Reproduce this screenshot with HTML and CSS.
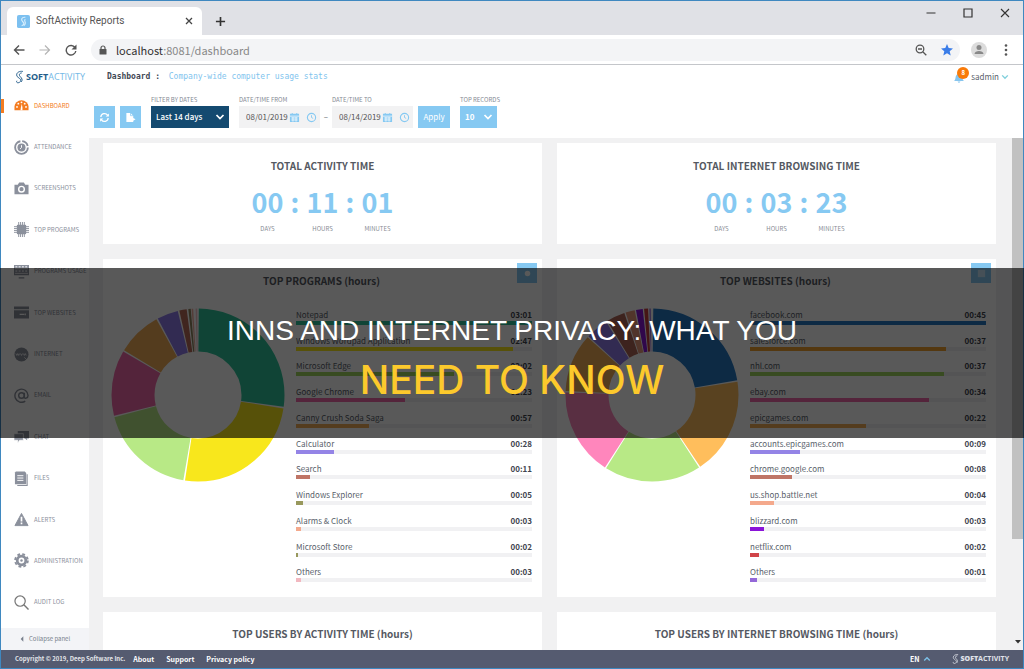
FILE: index.html
```html
<!DOCTYPE html>
<html lang="en">
<head>
<meta charset="utf-8">
<title>SoftActivity Reports</title>
<link rel="stylesheet" href="styles.css">
</head>
<body>
<svg class="defs" width="0" height="0" aria-hidden="true">
  <symbol id="chev" viewBox="0 0 10 10"><path d="M1.500 3l3.500 3.600L8.500 3" fill="none" stroke="currentColor" stroke-width="1.700"/></symbol>
  <symbol id="cal" viewBox="0 0 12 12"><path fill="currentColor" d="M1 2h2V1h1v1h4V1h1v1h2v9H1z"/><path stroke="#fff" stroke-width=".8" d="M1 4.500h10M2.500 6.500h7M2.500 8.700h7M4.300 5.500v5M7.700 5.500v5"/></symbol>
  <symbol id="clock" viewBox="0 0 12 12"><circle cx="6" cy="6" r="4.500" fill="none" stroke="currentColor" stroke-width="1.200"/><path d="M6 3.500V6l1.800 1" fill="none" stroke="currentColor"/></symbol>
  <symbol id="mark" viewBox="0 0 12 18"><path fill="none" stroke="currentColor" stroke-width="1.300" d="M10.500 1.500C6 .8 2 3 2.200 6.500c.2 3 3.500 3.300 5 5.500 1 1.700 0 4.500-3 4.800-2 0-2.600-1.500-1.700-2.800M9 3.500C5.500 4 5 6.500 7 8.500s3.500 4 1.500 7"/></symbol>
</svg>
<div class="window">
  <div class="tabs">
    <div class="tab">
      <svg class="fav" viewBox="0 0 14 14"><rect width="14" height="14" rx="2" fill="#7cc0f0"/><path d="M9 2.500C5 2 4 5 6 7s2 3.500-1 4.500M9 4.500c-2 1 0 2.500 0 4S8 11 7.500 11.500" fill="none" stroke="#d8eefc" stroke-width="1.200"/></svg>
      <span class="tab-title">SoftActivity Reports</span>
      <svg class="x" viewBox="0 0 8 8"><path d="M1 1l6 6M7 1L1 7" stroke="#444" stroke-width="1.300"/></svg>
    </div>
    <svg class="plus" viewBox="0 0 12 12"><path d="M6 1v10M1 6h10" stroke="#333" stroke-width="1.800"/></svg>
    <div class="wincontrols">
      <svg viewBox="0 0 10 10"><path d="M.5 5h9" stroke="#333"/></svg>
      <svg viewBox="0 0 10 10"><path d="M1 1h8v8H1z" fill="none" stroke="#333" stroke-width="1.200"/></svg>
      <svg viewBox="0 0 10 10"><path d="M1 1l8 8M9 1L1 9" stroke="#333" stroke-width="1.100"/></svg>
    </div>
  </div>
  <div class="toolbar">
    <svg class="nav" viewBox="0 0 12 12"><path d="M11.500 6H1.500M6 1.500L1.500 6 6 10.500" fill="none" stroke="#555" stroke-width="1.400"/></svg>
    <svg class="nav" viewBox="0 0 12 12"><path d="M.5 6h10M6 1.500L10.500 6 6 10.500" fill="none" stroke="#b4b4b4" stroke-width="1.200"/></svg>
    <svg class="nav" viewBox="0 0 12 12"><path d="M10 3.500A4.800 4.800 0 1 0 10.800 7" fill="none" stroke="#555" stroke-width="1.400"/><path d="M11.500.5v5h-5z" fill="#555"/></svg>
    <div class="url">
      <svg class="lock" viewBox="0 0 8 10"><path d="M2 5V3a2 2 0 0 1 4 0v2" fill="none" stroke="#555" stroke-width="1.200"/><rect x=".5" y="4" width="7" height="5.500" rx=".6" fill="#555"/></svg>
      <span class="addr">localhost<span>:8081/dashboard</span></span>
      <svg class="mag" viewBox="0 0 12 12"><circle cx="5" cy="5" r="3.800" fill="none" stroke="#555" stroke-width="1.300"/><path d="M3 5h4M8 8l3.300 3.300" stroke="#555" stroke-width="1.300"/></svg>
      <svg class="mag" viewBox="0 0 12 12"><path fill="#3b7de8" d="M6 0l1.700 4 4.300.4-3.300 2.800 1 4.300L6 9.200l-3.700 2.300 1-4.300L0 4.400 4.300 4z"/></svg>
    </div>
    <svg class="avatar" viewBox="0 0 16 16"><circle cx="8" cy="8" r="8" fill="#dcdcdc"/><circle cx="8" cy="5.500" r="2.500" fill="#888"/><path d="M3.500 12c0-4 9-4 9 0z" fill="#888"/></svg>
    <svg class="dots" viewBox="0 0 4 12"><g fill="#555"><circle cx="2" cy="1.500" r="1.300"/><circle cx="2" cy="6" r="1.300"/><circle cx="2" cy="10.500" r="1.300"/></g></svg>
  </div>

  <header class="appbar">
    <div class="logo"><svg viewBox="0 0 12 18"><use href="#mark"/></svg><b>SOFT</b><span>ACTIVITY</span></div>
    <h1>Dashboard : <span>Company-wide computer usage stats</span></h1>
    <div class="user">
      <div class="bell"><svg viewBox="0 0 12 12"><path fill="#86c5ee" d="M1 10c2-1.500 1-4 2.500-6S8 2 9 3.500 8.500 8 11 10zM4.500 10.500h3l-1.500 1.500z"/></svg><span class="badge">8</span></div>
      <span>sadmin</span><svg class="uchev" viewBox="0 0 10 10"><use href="#chev"/></svg>
    </div>
  </header>

  <div class="body">
    <nav class="side">
      <ul>
        <li class="on"><svg viewBox="0 0 16 16"><path fill="currentColor" d="M.5 13V9a7.500 6.500 0 0 1 15 0v4z"/><g fill="#fff"><circle cx="3.200" cy="9.500" r="1"/><circle cx="4.600" cy="6" r="1"/><circle cx="8" cy="4.600" r="1"/><circle cx="11.400" cy="6" r="1"/><circle cx="12.800" cy="9.500" r="1"/><path d="M7.300 10l1-4 .7 4v3H7z"/></g></svg><a href="#">DASHBOARD</a></li>
        <li><svg viewBox="0 0 16 16"><circle cx="8" cy="8" r="6.800" fill="none" stroke="currentColor" stroke-width="2" stroke-dasharray="30 2 8 2"/><circle cx="8" cy="8" r="4.300" fill="currentColor"/><path d="M8 5.500V8l-1.500 1.500" stroke="#fff" fill="none"/></svg><a href="#">ATTENDANCE</a></li>
        <li><svg viewBox="0 0 16 16"><path fill="currentColor" d="M.5 4h3.500l1.500-2.500h5L12 4h3.500v10H.5z"/><circle cx="8" cy="8.700" r="3" fill="none" stroke="#fff" stroke-width="1.500"/></svg><a href="#">SCREENSHOTS</a></li>
        <li><svg viewBox="0 0 16 16"><rect x="3" y="3" width="10" height="10" rx="1" fill="currentColor"/><path stroke="currentColor" d="M5 0v16M7 0v16M9 0v16M11 0v16M0 5h16M0 7h16M0 9h16M0 11h16"/></svg><a href="#">TOP PROGRAMS</a></li>
        <li><svg viewBox="0 0 16 16"><path fill="currentColor" d="M0 1h16v11H0zM5 14h6v1.500H5z"/><path stroke="#fff" stroke-dasharray="2 1.500" d="M1.500 3h13M1.500 7.500h13"/><path stroke="#fff" stroke-width=".7" d="M1 5h14M1 10h14"/></svg><a href="#">PROGRAMS USAGE</a></li>
        <li><svg viewBox="0 0 16 16"><path fill="currentColor" d="M0 1.500h16v3H0zM0 5.500h16v9H0z"/><path stroke="#fff" stroke-width="1.200" d="M6 10h5M12 9v2"/></svg><a href="#">TOP WEBSITES</a></li>
        <li><svg viewBox="0 0 16 16"><circle cx="8" cy="8" r="7.500" fill="currentColor"/><path stroke="#fff" stroke-width=".8" fill="none" d="M2 7l1 2 1-2 1 2 1-2M7 7l1 2 1-2M10 7l1 2 1-2 1 2M11 11l3 3"/></svg><a href="#">INTERNET</a></li>
        <li><svg viewBox="0 0 16 16"><g fill="none" stroke="currentColor" stroke-width="1.500"><circle cx="8" cy="8" r="3"/><path d="M11 5v4.500c0 2.500 4 1.500 4-1.500a7 7 0 1 0-3 6"/></g></svg><a href="#">EMAIL</a></li>
        <li><svg viewBox="0 0 16 16"><path fill="currentColor" d="M4 2h12v8h-2v2l-2.500-2H4z"/><path fill="currentColor" stroke="#fff" stroke-width=".7" d="M0 5h10v7H6l-2 3v-3H0z"/></svg><a href="#">CHAT</a></li>
        <li><svg viewBox="0 0 16 16"><path fill="currentColor" d="M1 1.500L2 .5h9.500L13 2v12H1z"/><path fill="none" stroke="currentColor" stroke-width="1.200" d="M14 3.500v12H3.500"/><path stroke="#fff" d="M3.500 5h6.500M3.500 7.500h6.500M3.500 10h6.500"/></svg><a href="#">FILES</a></li>
        <li><svg viewBox="0 0 16 16"><path fill="currentColor" stroke="currentColor" stroke-linejoin="round" d="M8 1.500L15 14.500H1z"/><path stroke="#fff" stroke-width="1.800" d="M8 5v5M8 11.300v1.800"/></svg><a href="#">ALERTS</a></li>
        <li><svg viewBox="0 0 16 16"><circle cx="8" cy="8" r="4.600" fill="none" stroke="currentColor" stroke-width="3"/><circle cx="8" cy="8" r="6.800" fill="none" stroke="currentColor" stroke-width="2" stroke-dasharray="3 2.340"/><circle cx="8" cy="8" r="1.300" fill="currentColor"/></svg><a href="#">ADMINISTRATION</a></li>
        <li><svg viewBox="0 0 16 16"><circle cx="6.500" cy="6.500" r="5.500" fill="none" stroke="#777" stroke-width="1.300"/><path d="M10.500 10.500l5 5" stroke="#777" stroke-width="1.500"/></svg><a href="#">AUDIT LOG</a></li>
      </ul>
      <button class="collapse" type="button"><svg viewBox="0 0 6 8"><path d="M5 0v8L1 4z" fill="#777f8c"/></svg>Collapse panel</button>
    </nav>

    <div class="content">
      <form class="filters">
        <button class="sq" type="button" aria-label="Refresh"><svg viewBox="0 0 12 12"><path d="M2 5.500a4 4 0 0 1 7.300-2M10 6.500a4 4 0 0 1-7.300 2" fill="none" stroke="#fff" stroke-width="1.400"/><path fill="#fff" d="M10.800 1.500v3.500H7.300zM1.200 10.500V7h3.500z"/></svg></button>
        <button class="sq" type="button" aria-label="Export"><svg viewBox="0 0 12 12"><path fill="#fff" d="M1.500 1H6l3 3v2.500L11.500 8 9 9.500v1.500H1.500z"/><path d="M6 1v3h3" stroke="#86c9f2" fill="none" stroke-width=".8"/></svg></button>
        <div class="field days"><label for="range">FILTER BY DATES</label><div class="pick dark"><select id="range"><option>Last 14 days</option></select><svg viewBox="0 0 10 10"><use href="#chev"/></svg></div></div>
        <div class="field from"><label for="from">DATE/TIME FROM</label><div class="date"><input id="from" type="text" value="08/01/2019"><svg viewBox="0 0 12 12"><use href="#cal"/></svg><svg viewBox="0 0 12 12"><use href="#clock"/></svg></div></div>
        <span class="dash">–</span>
        <div class="field"><label for="to">DATE/TIME TO</label><div class="date"><input id="to" type="text" value="08/14/2019"><svg viewBox="0 0 12 12"><use href="#cal"/></svg><svg viewBox="0 0 12 12"><use href="#clock"/></svg></div></div>
        <button class="apply" type="button">Apply</button>
        <div class="field records"><label for="top">TOP RECORDS</label><div class="pick"><select id="top"><option>10</option></select><svg viewBox="0 0 10 10"><use href="#chev"/></svg></div></div>
      </form>
      <div class="scroller">
        <main class="cards">
          <section class="card total">
            <h2>TOTAL ACTIVITY TIME</h2>
            <div class="timer"><div><b>00</b><small>DAYS</small></div><i>:</i><div><b>11</b><small>HOURS</small></div><i>:</i><div><b>01</b><small>MINUTES</small></div></div>
          </section>
          <section class="card total">
            <h2>TOTAL INTERNET BROWSING TIME</h2>
            <div class="timer"><div><b>00</b><small>DAYS</small></div><i>:</i><div><b>03</b><small>HOURS</small></div><i>:</i><div><b>23</b><small>MINUTES</small></div></div>
          </section>
          <section class="card chart">
            <h2>TOP PROGRAMS (hours)</h2>
            <button class="sq corner" type="button" aria-label="Settings"><svg viewBox="0 0 12 12"><circle cx="6" cy="6" r="3" fill="#fff"/></svg></button>
            <div class="split">
              <svg class="donut" viewBox="0 0 174 174"><g transform="rotate(-90 87 87)" fill="none" stroke-width="43">
                <circle pathLength="662" cx="87" cy="87" r="65" stroke="#2fc49a" stroke-dasharray="179 662" stroke-dashoffset="-1"/>
                <circle pathLength="662" cx="87" cy="87" r="65" stroke="#f8e71c" stroke-dasharray="165 662" stroke-dashoffset="-182"/>
                <circle pathLength="662" cx="87" cy="87" r="65" stroke="#b8e986" stroke-dasharray="120 662" stroke-dashoffset="-349"/>
                <circle pathLength="662" cx="87" cy="87" r="65" stroke="#f068a8" stroke-dasharray="81 662" stroke-dashoffset="-471"/>
                <circle pathLength="662" cx="87" cy="87" r="65" stroke="#f0ac58" stroke-dasharray="55 662" stroke-dashoffset="-554"/>
                <circle pathLength="662" cx="87" cy="87" r="65" stroke="#8f7bea" stroke-dasharray="26 662" stroke-dashoffset="-611"/>
                <circle pathLength="662" cx="87" cy="87" r="65" stroke="#b86a5a" stroke-dasharray="9 662" stroke-dashoffset="-639"/>
                <circle pathLength="662" cx="87" cy="87" r="65" stroke="#8f8560" stroke-dasharray="3 662" stroke-dashoffset="-650"/>
                <circle pathLength="662" cx="87" cy="87" r="65" stroke="#f0b0a0" stroke-dasharray="2 662" stroke-dashoffset="-654"/>
                <circle pathLength="662" cx="87" cy="87" r="65" stroke="#f2c4cc" stroke-dasharray="2 662" stroke-dashoffset="-659"/>
              </g></svg>
              <ul class="rows">
                <li><span>Notepad</span><b>03:01</b><div class="bar"><div class="c1" style="width:100%"></div></div></li>
                <li><span>Windows Wordpad Application</span><b>02:47</b><div class="bar"><div class="c2" style="width:92%"></div></div></li>
                <li><span>Microsoft Edge</span><b>02:02</b><div class="bar"><div class="c3" style="width:67%"></div></div></li>
                <li><span>Google Chrome</span><b>01:23</b><div class="bar"><div class="c4" style="width:46%"></div></div></li>
                <li><span>Canny Crush Soda Saga</span><b>00:57</b><div class="bar"><div class="c5" style="width:31%"></div></div></li>
                <li><span>Calculator</span><b>00:28</b><div class="bar"><div class="c6" style="width:16%"></div></div></li>
                <li><span>Search</span><b>00:11</b><div class="bar"><div class="c7" style="width:6%"></div></div></li>
                <li><span>Windows Explorer</span><b>00:05</b><div class="bar"><div class="c8" style="width:3%"></div></div></li>
                <li><span>Alarms &amp; Clock</span><b>00:03</b><div class="bar"><div class="c9" style="width:2%"></div></div></li>
                <li><span>Microsoft Store</span><b>00:02</b><div class="bar"><div class="c8" style="width:1%"></div></div></li>
                <li><span>Others</span><b>00:03</b><div class="bar"><div class="c10" style="width:2%"></div></div></li>
              </ul>
            </div>
          </section>
          <section class="card chart">
            <h2>TOP WEBSITES (hours)</h2>
            <button class="sq corner" type="button" aria-label="Settings"><svg viewBox="0 0 12 12"><rect x="2" y="2" width="8" height="8" fill="#c8e6f8"/></svg></button>
            <div class="split">
              <svg class="donut" viewBox="0 0 174 174"><g transform="rotate(-90 87 87)" fill="none" stroke-width="43">
                <circle pathLength="404" cx="87" cy="87" r="65" stroke="#2679c4" stroke-dasharray="89 404" stroke-dashoffset="-1"/>
                <circle pathLength="404" cx="87" cy="87" r="65" stroke="#ffbe5c" stroke-dasharray="73 404" stroke-dashoffset="-91"/>
                <circle pathLength="404" cx="87" cy="87" r="65" stroke="#b8e986" stroke-dasharray="73 404" stroke-dashoffset="-165"/>
                <circle pathLength="404" cx="87" cy="87" r="65" stroke="#ff86bc" stroke-dasharray="66 404" stroke-dashoffset="-239"/>
                <circle pathLength="404" cx="87" cy="87" r="65" stroke="#f0ac58" stroke-dasharray="44 404" stroke-dashoffset="-306"/>
                <circle pathLength="404" cx="87" cy="87" r="65" stroke="#8f7bea" stroke-dasharray="17 404" stroke-dashoffset="-351"/>
                <circle pathLength="404" cx="87" cy="87" r="65" stroke="#b06656" stroke-dasharray="14 404" stroke-dashoffset="-369"/>
                <circle pathLength="404" cx="87" cy="87" r="65" stroke="#e8977c" stroke-dasharray="7 404" stroke-dashoffset="-384"/>
                <circle pathLength="404" cx="87" cy="87" r="65" stroke="#8a14d8" stroke-dasharray="5 404" stroke-dashoffset="-392"/>
                <circle pathLength="404" cx="87" cy="87" r="65" stroke="#c84040" stroke-dasharray="3 404" stroke-dashoffset="-398"/>
                <circle pathLength="404" cx="87" cy="87" r="65" stroke="#9468d8" stroke-dasharray="1 404" stroke-dashoffset="-402"/>
              </g></svg>
              <ul class="rows">
                <li><span>facebook.com</span><b>00:45</b><div class="bar"><div class="w1" style="width:100%"></div></div></li>
                <li><span>salesforce.com</span><b>00:37</b><div class="bar"><div class="w2" style="width:83%"></div></div></li>
                <li><span>nhl.com</span><b>00:37</b><div class="bar"><div class="c3" style="width:82%"></div></div></li>
                <li><span>ebay.com</span><b>00:34</b><div class="bar"><div class="c4" style="width:76%"></div></div></li>
                <li><span>epicgames.com</span><b>00:22</b><div class="bar"><div class="c5" style="width:49%"></div></div></li>
                <li><span>accounts.epicgames.com</span><b>00:09</b><div class="bar"><div class="c6" style="width:21%"></div></div></li>
                <li><span>chrome.google.com</span><b>00:08</b><div class="bar"><div class="c7" style="width:18%"></div></div></li>
                <li><span>us.shop.battle.net</span><b>00:04</b><div class="bar"><div class="c9" style="width:10%"></div></div></li>
                <li><span>blizzard.com</span><b>00:03</b><div class="bar"><div class="w3" style="width:6%"></div></div></li>
                <li><span>netflix.com</span><b>00:02</b><div class="bar"><div class="w4" style="width:4%"></div></div></li>
                <li><span>Others</span><b>00:01</b><div class="bar"><div class="w5" style="width:3%"></div></div></li>
              </ul>
            </div>
          </section>
          <section class="card users"><h2>TOP USERS BY ACTIVITY TIME (hours)</h2></section>
          <section class="card users"><h2>TOP USERS BY INTERNET BROWSING TIME (hours)</h2></section>
        </main>
        <div class="scrollbar"><div class="thumb"></div><svg viewBox="0 0 8 6"><path d="M1 1h6L4 4.500z" fill="#333"/></svg></div>
      </div>
    </div>
  </div>

  <footer class="foot">
    <span class="copy">Copyright © 2019, Deep Software Inc.</span>
    <a href="#">About</a><a href="#">Support</a><a href="#">Privacy policy</a>
    <span class="lang">EN <svg viewBox="0 0 10 10"><path d="M1.500 7L5 3.500 8.500 7" fill="none" stroke="#7cc0e8" stroke-width="1.700"/></svg></span>
    <div class="logo light"><svg viewBox="0 0 12 18"><use href="#mark"/></svg><b>SOFT</b><span>ACTIVITY</span></div>
  </footer>
</div>
<div class="banner">
  <p class="line1">INNS AND INTERNET PRIVACY: WHAT YOU</p>
  <p class="line2">NEED TO KNOW</p>
</div>
</body>
</html>
```

FILE: styles.css
```css
* { box-sizing: border-box; }
body { margin: 0; color: #5a5f6b; font-family: "Noto Sans CJK SC", "Open Sans", sans-serif; font-size: 8px; line-height: 12px; }
ul, h1, h2, p { margin: 0; padding: 0; list-style: none; }
svg { display: block; flex: none; }
a { color: inherit; text-decoration: none; }
button, input, select { font: inherit; color: inherit; border: 0; padding: 0; margin: 0; background: none; }
.defs { position: absolute; }
.window { display: flex; flex-direction: column; height: 100vh; border: 1px solid #3f88c0; background: #fff; overflow: hidden; }

.tabs { display: flex; align-items: center; height: 34px; padding: 6px 13px 0 6px; background: #e0e1e6; }
.tab { display: flex; align-items: center; width: 195px; height: 28px; padding: 0 9px 0 10px; border-radius: 6px 6px 0 0; background: #fff; color: #555; font-family: Roboto, sans-serif; font-size: 10px; }
.fav { width: 13px; height: 13px; margin-right: 6px; }
.tab-title { flex: 1; white-space: nowrap; }
.x { width: 8px; height: 8px; }
.plus { width: 11px; height: 11px; margin-left: 13px; }
.wincontrols { display: flex; gap: 27px; margin-left: auto; padding-bottom: 16px; }
.wincontrols svg { width: 10px; height: 10px; }

.toolbar { display: flex; align-items: center; height: 30px; padding: 0 15px 0 12px; border-bottom: 1px solid #c4c6ca; }
.nav { width: 12px; height: 12px; margin-right: 14px; }
.url { display: flex; align-items: center; flex: 1; height: 22px; padding: 0 7px; border-radius: 11px; background: #f3f4f6; }
.lock { width: 8px; height: 10px; margin: 0 9px 0 1px; }
.addr { flex: 1; color: #333; font-size: 11px; line-height: 16px; }
.addr span { color: #888; }
.mag { width: 12px; height: 12px; margin-left: 14px; }
.avatar { width: 16px; height: 16px; margin: 0 17px 0 11px; }
.dots { width: 4px; height: 12px; }

.appbar { display: flex; align-items: center; height: 24px; padding: 0 14px; }
.logo { display: flex; align-items: center; width: 92px; color: #245d8a; font-family: "Open Sans", sans-serif; font-size: 9px; }
.logo svg { width: 9px; height: 14px; margin-right: 2px; }
.logo span { color: #72b8e6; }
h1 { color: #3f4854; font: bold 8px/12px "DejaVu Sans Mono", monospace; white-space: pre; }
h1 span { margin-left: 4px; color: #7fc4ee; font-weight: normal; }
.user { display: flex; align-items: center; margin-left: auto; font-size: 8px; }
.bell { position: relative; width: 12px; height: 12px; margin-right: 6px; }
.badge { position: absolute; left: 4px; top: -9px; width: 12px; height: 12px; border-radius: 6px; background: #f97a08; color: #fff; font-size: 6px; font-weight: bold; text-align: center; }
.bell .badge { left: 4px; top: -4px; }
.uchev { width: 8px; height: 8px; margin-left: 2px; color: #80d0dc; }

.body { display: flex; flex: 1; min-height: 0; }
.side { display: flex; flex-direction: column; width: 88px; }
.side ul { display: flex; flex: 1; flex-direction: column; padding-bottom: 5px; margin-top: -4px; }
.side li { display: flex; flex: 1; align-items: center; gap: 5px; padding-left: 13px; color: #8b909c; font-size: 6px; white-space: nowrap; }
.side li svg { width: 15px; height: 15px; }
.side .on { padding-left: 10px; color: #f47c20; background: linear-gradient(#f47c20, #f47c20) left / 3px 14px no-repeat; }
.side .on svg { margin-left: 3px; }
.collapse { display: flex; align-items: center; gap: 5px; height: 22px; padding-left: 19px; background: #f3f4f7; color: #777f8c; font-size: 6px; }
.collapse svg { width: 4px; height: 6px; }

.content { display: flex; flex: 1; flex-direction: column; min-width: 0; }
.filters { display: flex; align-items: flex-end; height: 49px; padding: 0 5px 10px; }
.sq, .apply { display: grid; place-items: center; width: 21px; height: 22px; margin-right: 5px; background: #86c9f2; color: #fff; }
.sq svg { width: 11px; height: 11px; }
.field label { display: block; height: 12px; color: #858a94; font-size: 6px; line-height: 12px; white-space: nowrap; }
.days { width: 78px; margin: 0 10px 0 5px; }
.pick { position: relative; height: 22px; background: #86c9f2; color: #fff; }
.dark { background: #144a70; }
.pick select { width: 100%; height: 100%; padding: 0 5px; appearance: none; font-size: 8px; font-weight: bold; }
.dark select { font-weight: 500; }
.pick svg { position: absolute; right: 4px; top: 6px; width: 10px; height: 10px; }
.date { display: flex; align-items: center; gap: 1px; width: 81px; height: 22px; padding: 0 3px 0 7px; background: #f2f2f3; color: #86c9f2; }
.date input { flex: 1; width: 0; min-width: 0; color: #555; font-size: 8px; }
.date svg { width: 11px; height: 11px; }
.date svg + svg { margin-left: 5px; }
.dash { width: 12px; padding-bottom: 5px; text-align: center; }
.apply { width: 32px; margin: 0 10px 0 5px; font-size: 8px; }
.records { width: 37px; }

.scroller { display: flex; flex: 1; min-height: 0; background: #f1f1f2; }
.cards { display: grid; flex: 1; grid-template-columns: 1fr 1fr; align-content: start; gap: 15px; min-width: 0; padding: 5px 16px 0 14px; overflow: hidden; }
.card { position: relative; background: #fff; text-align: center; }
.card h2 { color: #555962; font-size: 10px; line-height: 14px; }
.total { height: 101px; padding-top: 16px; }
.timer { display: flex; justify-content: center; padding-top: 15px; color: #86c9f2; }
.timer > div { display: flex; flex-direction: column; align-items: center; width: 32px; }
.timer b, .timer i { font-size: 27px; line-height: 28px; font-style: normal; font-weight: bold; }
.timer i { width: 23px; }
.timer small { margin-top: 8px; color: #888c94; font-size: 6px; line-height: 10px; }
.chart { height: 338px; padding: 15px 10px 0 8px; }
.corner { position: absolute; right: 5px; top: 4px; width: 20px; height: 20px; margin: 0; }
.split { display: grid; grid-template-columns: 174px 1fr; align-items: start; gap: 11px; padding-top: 20px; }
.donut { width: 174px; height: 174px; }
.rows { display: flex; flex-direction: column; height: 283px; text-align: left; }
.rows li { display: flex; flex: 1; flex-wrap: wrap; align-content: flex-start; justify-content: space-between; font-size: 8px; line-height: 13px; }
.rows b { color: #41454f; }
.bar { width: 100%; height: 4px; background: #f1f1f3; }
.bar div { height: 4px; }
.c1 { background: #2fc49a; }
.c2 { background: #f8e71c; }
.c3 { background: #a0d860; }
.c4 { background: #f068a8; }
.c5 { background: #f0ac58; }
.c6 { background: #9484e6; }
.c7 { background: #bf7566; }
.c8 { background: #98985c; }
.c9 { background: #f4a98c; }
.c10 { background: #f2b8c0; }
.w1 { background: #2679c4; }
.w2 { background: #efa030; }
.w3 { background: #8a14d8; }
.w4 { background: #d04448; }
.w5 { background: #9468d8; }
.users { height: 101px; padding-top: 15px; }
.scrollbar { display: flex; flex-direction: column; align-items: center; justify-content: space-between; width: 11px; padding-bottom: 5px; }
.thumb { width: 100%; height: 79%; background: #c1c1c1; }
.scrollbar svg { width: 8px; height: 6px; }

.foot { display: flex; align-items: center; gap: 12px; height: 18px; padding: 0 14px; background: #555b70; color: #fff; font-size: 7px; font-weight: bold; }
.copy { color: #e4e6ea; font-size: 6px; margin-right: -4px; }
.lang { display: flex; align-items: center; gap: 3px; margin-left: auto; margin-right: 9px; }
.lang svg { width: 8px; height: 8px; }
.foot .logo { width: auto; font-size: 7px; }
.foot .light, .foot .light span { color: #e0e3ea; }
.foot .logo svg { width: 7px; height: 12px; margin-right: 2px; }

.banner { position: absolute; left: 0; right: 0; top: 268px; height: 170px; padding-top: 42px; background: rgba(0, 0, 0, .65); text-align: center; white-space: nowrap; }
.line1 { color: #fff; font: 28px/42px "Liberation Sans", Arial, sans-serif; }
.line2 { color: #fcc92c; font: 500 39px/56px Inter, sans-serif; }
```
